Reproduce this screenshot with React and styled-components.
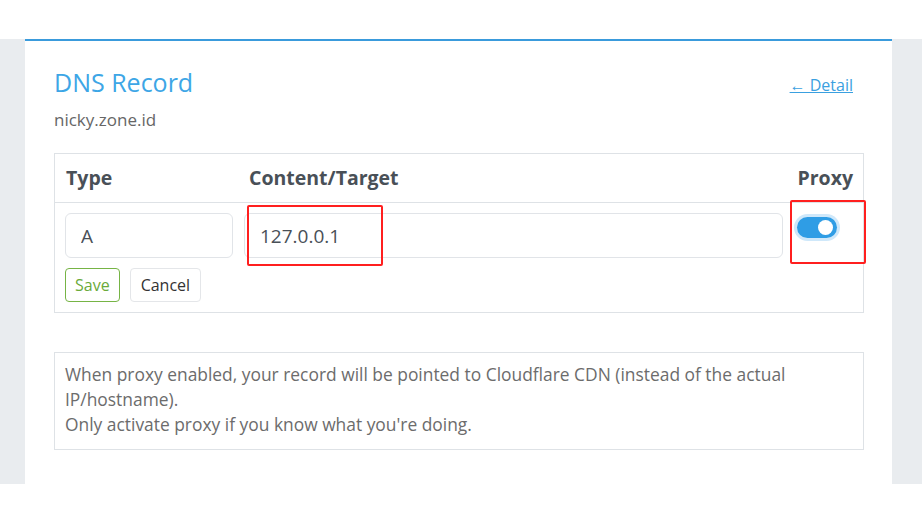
import React from "react";
import styled, { createGlobalStyle } from "styled-components";

const Global = createGlobalStyle`
  html, body { margin: 0; padding: 0; background: #fff; }
  body { font-family: "Open Sans", "Noto Sans", sans-serif; }
  * { box-sizing: border-box; }
`;

const Page = styled.div`
  width: 922px;
  height: 521px;
  padding-top: 39px;
  background: #fff;
`;

const Backdrop = styled.div`
  height: 445px;
  background: #e9ecef;
  padding: 0 30px 0 25px;
`;

const Card = styled.div`
  height: 100%;
  background: #fff;
  border-top: 2px solid #3a9bdc;
  padding: 26px 28px 0 29px;
`;

const HeadRow = styled.div`
  display: flex;
  justify-content: space-between;
  align-items: flex-end;
  padding-right: 11px;
`;

const Title = styled.h2`
  margin: 0;
  font-family: "Open Sans", sans-serif;
  font-weight: 400;
  font-size: 25px;
  line-height: 30px;
  color: #3da6e6;
`;

const BackLink = styled.a`
  font-size: 16px;
  line-height: 22px;
  color: #3aa0e0;
  text-decoration: underline;
  margin-bottom: 1px;
  cursor: pointer;
`;

const Zone = styled.div`
  margin-top: 11px;
  font-size: 17px;
  line-height: 23px;
  color: #666;
`;

const Table = styled.div`
  margin-top: 22px;
  border: 1px solid #dee2e6;
`;

const Grid = styled.div`
  display: grid;
  grid-template-columns: 168px 1fr 59px;
  column-gap: 11px;
  padding: ${(p) => p.$pad};
  border-bottom: ${(p) => (p.$divider ? "1px solid #dee2e6" : "none")};
`;

const Th = styled.div`
  font-family: "Open Sans", sans-serif;
  font-weight: 700;
  font-size: 19.5px;
  line-height: 48px;
  color: #495057;
  padding-left: ${(p) => p.$indent || "0"};
  text-align: ${(p) => (p.$right ? "right" : "left")};
`;

const Cell = styled.div`
  position: relative;
  display: flex;
  flex-direction: column;
  gap: 10px;
`;

const Input = styled.input`
  width: 100%;
  height: 45px;
  border: 1px solid #e1e4e8;
  border-radius: 6px;
  padding: 0 ${(p) => p.$indent || "12px"};
  font-family: "Open Sans", sans-serif;
  font-size: 19px;
  color: #495057;
  background: #fff;
  outline: none;
`;

const Buttons = styled.div`
  display: flex;
  gap: 10px;
`;

const Btn = styled.button`
  height: 34px;
  padding: 0 ${(p) => (p.$primary ? "9px" : "10px")};
  border-radius: 4px;
  background: #fff;
  font-family: "Open Sans", sans-serif;
  font-size: 16px;
  border: 1px solid ${(p) => (p.$primary ? "#76b445" : "#e4e6e9")};
  color: ${(p) => (p.$primary ? "#6aaa3a" : "#333")};
`;

const Mark = styled.div`
  position: absolute;
  border: 2px solid #ff1f1f;
  border-radius: 2px;
  pointer-events: none;
  left: ${(p) => p.$l}px;
  top: ${(p) => p.$t}px;
  width: ${(p) => p.$w}px;
  height: ${(p) => p.$h}px;
`;

const Switch = styled.div`
  margin: 4px 0 0 3px;
  width: 40px;
  height: 21px;
  border-radius: 11px;
  background: #2f9de5;
  box-shadow: 0 0 0 3px #cfe8fa;
  position: relative;
  &::after {
    content: "";
    position: absolute;
    right: 4px;
    top: 3px;
    width: 15px;
    height: 15px;
    border-radius: 50%;
    background: #fff;
  }
`;

const Note = styled.div`
  margin-top: 39px;
  border: 1px solid #dee2e6;
  padding: 9px 10px 12px;
  font-size: 17.4px;
  line-height: 25px;
  color: #6c6c6c;
`;

export default function App() {
  return (
    <Page>
      <Global />
      <Backdrop>
        <Card>
          <HeadRow>
            <Title>DNS Record</Title>
            <BackLink>← Detail</BackLink>
          </HeadRow>
          <Zone>nicky.zone.id</Zone>
          <Table>
            <Grid $pad="0 10px" $divider>
              <Th $indent="1px">Type</Th>
              <Th $indent="5px">Content/Target</Th>
              <Th $right>Proxy</Th>
            </Grid>
            <Grid $pad="10px 10px 10px">
              <Cell>
                <Input defaultValue="A" $indent="15px" readOnly />
                <Buttons>
                  <Btn $primary>Save</Btn>
                  <Btn>Cancel</Btn>
                </Buttons>
              </Cell>
              <Cell>
                <Input defaultValue="127.0.0.1" $indent="15px" readOnly />
                <Mark $l={3} $t={-8} $w={136} $h={61} />
              </Cell>
              <Cell>
                <Switch />
                <Mark $l={-4} $t={-13} $w={76} $h={64} />
              </Cell>
            </Grid>
          </Table>
          <Note>
            When proxy enabled, your record will be pointed to Cloudflare CDN (instead of the actual
            <br />
            IP/hostname).
            <br />
            Only activate proxy if you know what you're doing.
          </Note>
        </Card>
      </Backdrop>
    </Page>
  );
}
